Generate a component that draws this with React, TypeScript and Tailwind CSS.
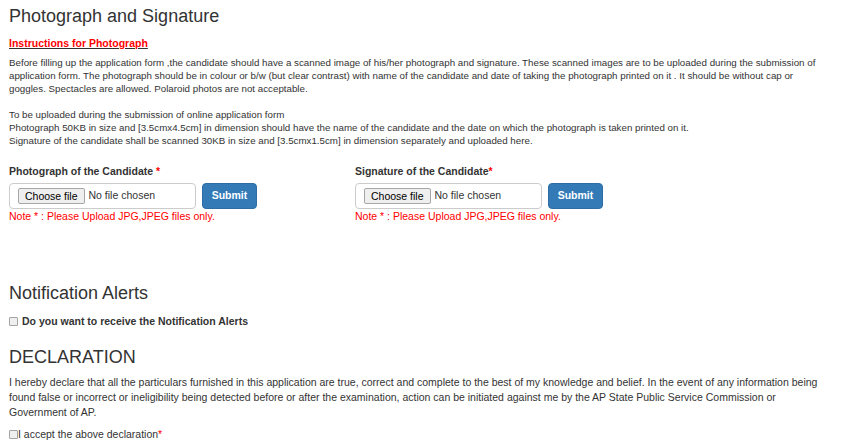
const FileBox = () => (
  <div className="flex items-center gap-[6px]">
    <div className="flex h-[26px] w-[187px] items-center rounded-[4px] border border-[#cccccc] bg-white pl-[8px]">
      <span className="rounded-[2px] border border-[#a6a6a6] bg-[#efefef] px-[6px] text-[10.5px] leading-[14px] text-black">
        Choose file
      </span>
      <span className="ml-[4px] text-[10.5px] text-[#333333]">No file chosen</span>
    </div>
    <button className="h-[26px] w-[55px] rounded-[4px] border border-[#2e6da4] bg-[#337ab7] text-[10.5px] font-bold text-white">
      Submit
    </button>
  </div>
);

const Upload = ({ label, spaced }: { label: string; spaced: boolean }) => (
  <div className="w-[346px]">
    <p className="text-[10.5px] font-bold leading-[15px] text-[#333333]">
      {label}
      {spaced ? " " : ""}
      <span className="text-[#ff0000]">*</span>
    </p>
    <div className="mt-[4px]">
      <FileBox />
    </div>
    <p className="text-[10.5px] leading-[15px] text-[#ff0000]">
      Note * : Please Upload JPG,JPEG files only.
    </p>
  </div>
);

const Check = () => (
  <span className="inline-block h-[9px] w-[9px] rounded-[1px] border border-[#a3a3a3] bg-[#efefef] align-[-1px]" />
);

export default function App() {
  return (
    <div
      className="min-h-screen bg-white pl-[9px] text-[#333333]"
      style={{ fontFamily: '"Liberation Sans", Arial, sans-serif' }}
    >
      <div className="w-[812px]">
        <h1 className="pt-[6px] text-[18px] leading-[20px]">Photograph and Signature</h1>

        <p className="mt-[10px] text-[10.5px] font-bold leading-[15px]">
          <u className="decoration-[#333333]">
            <span className="text-[#ff0000]">Instructions for Photograph</span>
          </u>
        </p>

        <p className="mt-[5px] text-[9.75px] leading-[13px]">
          Before filling up the application form ,the candidate should have a scanned image of his/her
          photograph and signature. These scanned images are to be uploaded during the submission of
          application form. The photograph should be in colour or b/w (but clear contrast) with name of
          the candidate and date of taking the photograph printed on it . It should be without cap or
          goggles. Spectacles are allowed. Polaroid photos are not acceptable.
          <br />
          <br />
          To be uploaded during the submission of online application form
          <br />
          Photograph 50KB in size and [3.5cmx4.5cm] in dimension should have the name of the candidate
          and the date on which the photograph is taken printed on it.
          <br />
          Signature of the candidate shall be scanned 30KB in size and [3.5cmx1.5cm] in dimension
          separately and uploaded here.
        </p>

        <div className="mt-[17px] flex">
          <Upload label="Photograph of the Candidate" spaced />
          <Upload label="Signature of the Candidate" spaced={false} />
        </div>

        <h2 className="mt-[59px] text-[18px] leading-[20px]">Notification Alerts</h2>

        <label className="mt-[11px] block text-[10.5px] font-bold leading-[15px]">
          <Check />
          <span className="ml-[4px]">Do you want to receive the Notification Alerts</span>
        </label>

        <h2 className="mt-[18px] text-[18px] leading-[20px]">DECLARATION</h2>

        <p className="mt-[8px] text-[10.5px] leading-[15px]">
          I hereby declare that all the particulars furnished in this application are true, correct and
          complete to the best of my knowledge and belief. In the event of any information being found
          false or incorrect or ineligibility being detected before or after the examination, action can
          be initiated against me by the AP State Public Service Commission or Government of AP.
        </p>

        <label className="mt-[7px] block text-[10.5px] leading-[15px]">
          <Check />
          <span>I accept the above declaration</span>
          <span className="text-[#ff0000]">*</span>
        </label>
      </div>
    </div>
  );
}
